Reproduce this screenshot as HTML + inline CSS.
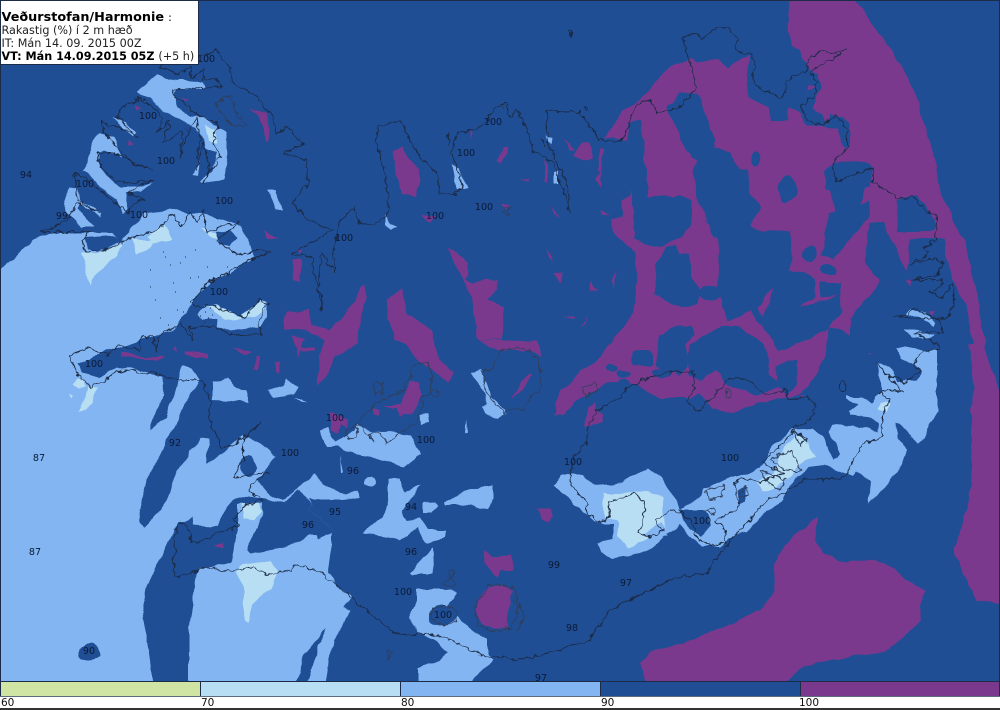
<!DOCTYPE html>
<html><head><meta charset="utf-8"><title>Veðurstofan/Harmonie</title>
<style>
html,body{margin:0;padding:0;background:#fff;width:1000px;height:710px;overflow:hidden}
svg{display:block;font-family:"DejaVu Sans","Liberation Sans",sans-serif}
.d{fill:#1f4e95}.l{fill:#82b5f1}.p{fill:#b7def2}.v{fill:#7b398d}
.c{fill:none;stroke:#1c2b47;stroke-width:1;stroke-linejoin:round}
.g{fill:none;stroke:#2f3f5c;stroke-width:1;stroke-linejoin:round}
.t text{font-size:9.6px;text-anchor:middle;fill:#0c1a35}
</style></head><body>
<svg width="1000" height="710" viewBox="0 0 1000 710" xmlns="http://www.w3.org/2000/svg">
<defs>
<filter id="wob" filterUnits="userSpaceOnUse" x="-20" y="-20" width="1040" height="750" color-interpolation-filters="sRGB">
<feTurbulence type="fractalNoise" baseFrequency="0.06" numOctaves="2" seed="4" result="n"/>
<feDisplacementMap in="SourceGraphic" in2="n" scale="7" xChannelSelector="R" yChannelSelector="G"/>
</filter>
<filter id="wig" filterUnits="userSpaceOnUse" x="-20" y="-20" width="1040" height="750" color-interpolation-filters="sRGB">
<feTurbulence type="fractalNoise" baseFrequency="0.16" numOctaves="2" seed="9" result="n"/>
<feDisplacementMap in="SourceGraphic" in2="n" scale="7" xChannelSelector="R" yChannelSelector="G"/>
</filter>
</defs>
<rect width="1000" height="681" fill="#1f4e95"/>

<g filter="url(#wob)">
<!-- west sea light -->
<path class="l" d="M-15,285L33,240L53,233L113,233L120,240L143,213L167,210L200,213L240,227L248,240L255,258L213,282L197,297L172,330L120,347L93,355L77,363L83,373L100,378L117,367L133,368L160,375L163,377L162,397L150,430L167,417L182,365L193,368L200,380L173,427L147,480L138,520L143,527L163,510L178,470L200,438L210,437L207,465L227,448L243,435L267,448L275,458L257,480L267,492L283,500L297,488L315,475L325,485L347,495L357,490L358,498L343,500L320,500L308,498L312,505L308,508L325,523L332,530L332,540L327,573L343,592L352,597L344,608L351,610L333,640L325,690L-15,690Z"/>
<!-- dark overlays on sea -->
<path class="d" d="M177,522L147,587L142,613L148,647L154,690L188,690L188,630L195,587L197,573L200,567L231,563L238,527L233,525L217,527L195,525L194,517L185,522Z"/>
<path class="d" d="M217,527L233,500L248,496L263,498L283,503L297,490L305,497L308,500L312,505L308,508L325,523L332,530L332,533L318,539L316,535L310,535L287,547L250,554L247,550L257,528L238,527Z"/>
<path class="d" d="M293,690L305,653L327,629L315,655L305,690Z"/>
<ellipse class="d" cx="249" cy="466" rx="7" ry="11"/>
<ellipse class="d" cx="89" cy="652" rx="10" ry="8"/>
<path class="l" d="M238,505L262,503L263,515L257,530L238,530Z"/>
<path class="p" d="M243,505L258,503L262,510L255,520L244,518Z"/>
<path class="p" d="M235,573L240,567L257,561L270,562L278,572L273,583L253,605L248,622L245,620L242,603L242,587Z"/>

<!-- Westfjord lights -->
<path class="d" d="M85,238L115,236L122,240L105,250L88,250Z"/>
<path class="l" d="M137,93L155,75L163,78L177,80L192,80L202,83L207,90L190,87L177,88L172,93L177,107L192,117L197,115L227,132L227,150L223,180L203,183L200,182L213,170L217,153L205,148L197,127L175,118L160,107L150,98Z"/>
<path class="l" d="M192,175L200,160L198,176Z"/>
<path class="p" d="M205,125L215,130L217,143L208,140Z"/>
<path class="l" d="M100,133L113,137L122,157L103,150L98,153L100,167L110,180L120,187L143,187L153,182L140,193L125,192L128,210L122,213L117,200L97,183L83,170L90,153L95,140Z"/>
<path class="l" d="M113,117L127,123L137,133L133,137L123,127Z"/>
<path class="l" d="M70,187L78,188L80,200L102,213L100,217L80,203L77,207L93,227L80,227L68,213L63,203Z"/>
<path class="p" d="M82,253L100,252L123,243L118,255L100,270L90,285L87,273Z"/>
<path class="p" d="M132,240L157,240L150,248L137,253Z"/>
<path class="p" d="M148,236L165,225L172,238L155,244Z"/>
<path class="p" d="M200,228L220,235L232,240L215,240Z"/>
<path class="d" d="M216,232L230,230L238,238L230,247L219,245Z"/>

<!-- Snaefellsnes -->
<path class="l" d="M197,315L205,305L215,303L240,317L260,300L267,303L267,317L260,325L240,330L217,328L207,323Z"/>
<path class="p" d="M207,305L217,304L240,318L260,300L265,304L262,312L242,320L225,318Z"/>
<path class="d" d="M203,320L217,320L218,328L205,328Z"/>
<path class="p" d="M73,383L77,378L84,380L86,388L78,389Z"/>
<path class="p" d="M80,413L88,388L97,388L92,403Z"/>
<path class="p" d="M71,394L75,397L72,399Z"/>

<!-- Mid / South light blobs -->
<path class="l" d="M213,383L227,377L235,387L245,390L248,402L213,400Z"/>
<path class="l" d="M267,392L283,387L288,377L298,387L293,395L273,398Z"/>
<path class="l" d="M293,399L303,399L307,403Z"/>
<path class="l" d="M320,430L327,427L335,442L355,430L357,425L370,430L410,435L420,453L402,467L373,457L362,455L347,452L337,447L328,447Z"/>
<path class="l" d="M340,455L343,472L341,472Z"/>
<circle class="l" cx="370" cy="482" r="5.500"/>
<path class="l" d="M388,480L400,480L405,492L420,485L402,510L405,520L420,518L428,530L445,530L445,537L425,542L417,528L400,540L363,533L383,517L388,497Z"/>
<path class="l" d="M423,501L435,503L437,507L431,513L423,513Z"/>
<path class="l" d="M445,502L470,490L492,485L492,498L487,508L463,505L445,505Z"/>
<path class="l" d="M410,573L428,552L433,547L434,572L420,572L412,575Z"/>
<path class="l" d="M420,415L428,414L429,422L421,424Z"/>
<path class="l" d="M466,418L468,433L465,433Z"/>
<path class="l" d="M472,372L482,368L490,397L505,410L507,415L497,418L487,413L483,407L487,403L477,380L472,373Z"/>
<path class="l" d="M417,590L447,590L457,592L448,605L458,615L463,622L480,635L488,640L488,653L493,660L463,690L418,690L418,668L440,660L447,652L437,643L417,632L408,618L417,600Z"/>
<ellipse class="d" cx="443" cy="615" rx="15" ry="10"/>
<path class="l" d="M386,215L391,223L397,227L391,230L386,225Z"/>
<path class="l" d="M452,165L458,168L468,188L464,189L456,188Z"/>
<path class="l" d="M546,135L552,138L551,146Z"/>
<path class="l" d="M554,172L559,172L559,183L554,183Z"/>
<path class="l" d="M268,190L276,190L282,210L275,210Z"/>
<ellipse class="l" cx="729" cy="215" rx="5" ry="7.500"/>

<!-- South-east light -->
<path class="l" d="M552,487L560,475L583,475L593,485L623,483L647,468L660,478L677,500L680,510L700,497L703,490L727,478L740,475L760,468L773,447L793,428L813,427L825,443L832,460L840,453L838,443L828,433L830,425L842,423L853,427L863,428L877,433L878,423L867,417L850,415L848,410L860,403L845,400L845,397L860,397L873,402L882,390L878,363L882,363L893,373L898,382L917,380L920,370L913,363L900,357L897,350L920,353L937,350L937,412L923,437L917,442L905,428L897,422L898,437L907,450L903,463L883,490L868,503L870,480L857,472L853,477L825,465L807,467L788,490L783,500L757,520L747,532L727,537L720,547L703,547L690,537L680,525L664,535L647,552L613,558L602,553L597,543L613,540L613,523L597,523L583,513L573,500Z"/>
<path class="d" d="M678,510L705,510L712,525L702,537L690,530Z"/>
<path class="d" d="M738,490L747,487L747,500L740,503Z"/>
<path class="p" d="M603,493L623,493L650,490L663,497L665,530L643,540L630,548L618,537L617,520L605,517Z"/>
<path class="p" d="M787,443L800,435L808,443L817,457L800,463L793,477L780,483L763,493L758,482L773,473L778,458Z"/>
<path class="p" d="M880,403L890,402L888,412L878,410Z"/>
<path class="l" d="M645,533L662,522L667,535L650,540Z"/>
<path class="l" d="M896,349L908,358L935,358L937,350L923,350L905,347Z"/>
<path class="l" d="M905,329L923,332L935,335L927,338L913,337Z"/>
<path class="l" d="M907,315L912,308L923,313L937,323L935,326L920,318L912,315Z"/>

<!-- Purple big NE mass -->
<path class="v" d="M553,415L563,390L583,370L600,357L617,335L633,313L637,293L635,252L612,232L612,220L622,217L622,200L630,197L632,180L627,140L605,137L623,110L640,100L665,72L672,67L693,57L698,63L718,58L728,67L740,60L750,57L747,77L748,97L770,107L772,120L788,120L788,108L800,113L807,125L827,127L837,128L840,140L845,147L850,147L850,123L843,115L830,115L827,125L813,107L820,87L820,73L808,67L800,50L790,43L787,-15L843,-15L870,20L895,55L915,90L925,125L935,160L943,200L953,217L965,243L973,273L980,313L985,345L972,345L968,310L957,287L948,263L943,240L932,238L910,240L908,255L905,270L905,287L892,287L880,280L865,300L850,320L850,335L828,340L825,360L803,393L787,397L757,403L733,413L712,410L700,395L690,398L660,398L640,388L625,380L605,385L575,400L563,415Z"/>
<path class="v" d="M984,345L993,373L1015,425L1015,605L975,600L968,582L960,567L955,547L962,527L968,500L972,483L972,373L968,345Z"/>
<path class="v" d="M817,517L815,540L823,553L847,563L873,558L893,568L905,580L925,590L920,620L890,650L830,660L800,668L780,690L650,690L640,665L650,652L680,645L715,630L760,610L776,590L775,563L785,545L800,530Z"/>
<!-- dark blobs over purple -->
<g class="d">
<path d="M627,125L640,120L645,140L642,160L647,170L647,197L680,195L692,200L692,225L683,235L660,248L653,247L635,240L632,197L628,170Z"/>
<path d="M667,107L680,93L695,93L702,100L705,113L715,140L715,147L730,153L740,170L748,170L750,193L762,208L750,227L767,233L770,240L757,240L715,237L710,230L698,200L693,177L697,160L690,157L680,137L670,117Z"/>
<path d="M665,248L675,243L680,255L690,255L690,275L700,290L698,305L680,308L665,300L655,295L655,265Z"/>
<ellipse cx="710" cy="293" rx="11" ry="8"/>
<path d="M703,220L715,228L757,232L770,230L792,232L793,260L788,270L805,272L815,280L815,297L800,308L840,295L842,312L825,330L812,337L797,345L777,352L763,325L750,310L737,318L727,322L720,300L717,287L720,240Z"/>
<path d="M687,375L690,345L700,338L720,328L740,325L750,335L765,345L770,375L785,385L757,395L728,385L715,370L700,380Z"/>
<path d="M655,365L660,335L680,325L693,325L693,335L685,345L690,360L680,375L660,368Z"/>
<rect x="632" y="350" width="21" height="17" rx="5"/>
<ellipse cx="612" cy="369" rx="6" ry="4"/><ellipse cx="625" cy="373" rx="7" ry="4"/><ellipse cx="625" cy="382" rx="6" ry="4"/>
<ellipse cx="661" cy="373" rx="10" ry="5"/>
<path d="M775,365L797,360L797,385L788,395L778,385Z"/>
<ellipse cx="810" cy="254" rx="8" ry="7"/>
<path d="M830,213L870,200L868,220L847,243L833,260L822,253Z"/>
<path d="M897,200L916,195L935,220L935,230L915,232L897,232L898,215Z"/>
<ellipse cx="756" cy="160" rx="5" ry="7"/>
<ellipse cx="787" cy="189" rx="9" ry="14"/>
<path d="M825,170L835,163L867,162L873,167L870,187L850,190L825,190Z"/>
<path d="M830,187L865,187L860,205L835,213Z"/>
<path d="M867,233L875,223L890,235L905,270L905,287L892,287L880,280L865,263Z"/>
<path d="M820,283L840,283L840,295L820,297Z"/>
<ellipse cx="828" cy="270" rx="8" ry="5"/>
<path d="M870,223L885,223L890,240L870,240Z"/>
<path d="M827,327L850,335L840,365L825,360Z"/>
<ellipse cx="425" cy="347" rx="8" ry="8"/>
</g>
<path class="v" d="M773,287L758,308L763,317L770,300Z"/>
<path class="v" d="M807,85L815,88L806,92Z"/>

<!-- purple patches -->
<g class="v">
<path d="M393,150L403,147L408,158L420,170L417,197L403,195L397,177Z"/>
<path d="M448,248L457,253L468,263L465,280L472,282L497,280L498,290L485,300L505,307L503,327L503,340L477,340L472,297Z"/>
<path d="M477,340L497,350L530,350L542,358L537,342Z"/>
<path d="M387,300L402,288L407,313L432,330L438,360L455,372L448,383L438,372L418,362L407,343L395,340L387,320Z"/>
<path d="M283,320L287,312L308,310L310,325L330,330L340,320L357,300L365,285L367,297L360,317L358,345L335,355L325,380L317,385L320,355L325,340L305,330L283,330Z"/>
<path d="M293,337L305,338L298,358Z"/>
<path d="M122,352L145,358L163,355L165,358L145,360L123,357Z"/>
<path d="M185,350L207,353L208,358L197,357L185,353Z"/>
<path d="M233,348L253,352L245,355Z"/>
<path d="M257,357L261,357L256,372L253,370Z"/>
<path d="M275,362L279,362L278,372L275,370Z"/>
<path d="M300,347L315,347L315,350L300,350Z"/>
<path d="M173,350L175,346L177,352Z"/>
<path d="M330,413L348,420L347,428L340,425L337,435L330,430Z"/>
<path d="M373,408L380,410L378,416L373,414Z"/>
<path d="M383,405L400,405L410,382L420,382L422,395L413,413L400,417L395,408Z"/>
<path d="M533,372L525,388L512,398L520,385L530,373Z"/>
<path d="M585,427L590,410L597,403L598,412L603,412L602,422L593,427Z"/>
<path d="M538,508L550,508L553,517L550,521L543,518Z"/>
<path d="M483,550L493,557L500,557L513,555L514,570L500,570L498,578L490,570L485,563Z"/>
<path d="M488,588L503,585L513,590L507,617L507,627L493,630L480,622L475,610L480,598Z"/>
<path d="M503,148L508,148L502,163L497,160Z"/>
<path d="M563,140L575,150L570,150Z"/>
<path d="M582,142L590,143L593,158L583,160L573,155Z"/>
<path d="M600,148L603,148L602,172L598,172Z"/>
<path d="M543,160L547,165L547,183L544,182Z"/>
<path d="M552,205L560,218L554,213Z"/>
<path d="M522,177L530,178L529,181Z"/>
<path d="M547,248L553,260L549,258Z"/>
<path d="M553,273L562,272L560,283Z"/>
<path d="M592,282L597,292L590,292Z"/>
<path d="M612,280L617,270L613,288Z"/>
<path d="M563,317L575,317L573,320Z"/>
<path d="M580,327L588,317L586,323Z"/>
<path d="M600,210L610,215L602,215Z"/>
<path d="M597,180L600,187L602,170Z"/>
<path d="M423,213L435,217L430,223Z"/>
<path d="M470,130L473,130L472,140Z"/>
<path d="M500,205L510,205L505,210Z"/>
<path d="M250,108L267,113L270,142L267,142L260,115Z"/>
<path d="M263,230L277,237L268,240Z"/>
<path d="M293,260L302,260L300,282L295,280Z"/>
<path d="M215,547L223,543L223,548Z"/>
<path d="M180,97L190,100L185,101Z"/>
<path d="M135,105L142,108L137,110Z"/>
<path d="M128,140L132,145L126,144Z"/>
<path d="M297,250L304,250L300,254Z"/>
<path d="M800,395L805,395L802,398Z"/>
<path d="M870,352L873,352L871,354Z"/>
<path d="M904,281L912,280L909,287Z"/>
<path d="M927,312L935,310L932,316Z"/>
</g>
</g>

<!-- coast -->
<g filter="url(#wig)">
<path class="c" d="M198,57L210,52L217,49L222,57L230,67L233,83L257,97L272,117L277,133L287,127L305,143L283,153L307,160L308,183L293,203L307,220L333,230L303,247L290,253L313,257L315,280L322,297L322,310L318,287L322,253L335,273L333,253L340,222L353,207L360,223L373,225L387,217L389,197L377,140L378,127L400,120L408,137L420,157L437,173L440,193L453,195L463,187L453,157L452,152L457,133L480,128L497,107L507,103L510,117L517,110L523,120L530,140L533,150L553,163L567,203L570,213L567,183L547,143L547,110L567,112L580,112L600,140L623,140L633,113L637,103L650,100L657,113L680,107L697,87L688,57L683,38L692,33L703,38L715,28L727,28L737,37L735,50L753,55L755,70L752,80L760,88L780,98L786,93L786,80L807,70L810,57L822,52L837,53L847,50L810,72L818,82L813,97L800,107L807,120L823,125L837,115L847,130L847,147L835,160L833,173L837,182L873,167L873,183L903,200L913,197L923,208L937,217L935,240L923,248L930,253L910,265L930,258L943,262L937,275L910,280L942,280L940,288L930,292L943,298L952,283L955,300L947,318L937,319L913,308L907,315L895,317L937,319L943,333L913,333L923,337L937,343L937,350L923,352L913,363L920,370L907,382L890,377L877,363L890,378L902,392L887,390L880,392L890,400L882,415L882,437L863,445L852,463L845,477L827,480L807,478L787,492L767,500L740,530L720,553L707,573L673,578L640,595L610,610L590,640L560,650L523,660L500,657L487,658L463,647L447,638L423,633L407,635L395,633L368,612L343,590L325,575L307,567L293,565L292,570L280,572L267,575L253,567L230,572L205,567L187,575L175,577L173,557L177,550L173,540L178,522L187,527L192,542L202,542L217,533L230,530L240,525L235,520L242,507L263,500L248,490L257,480L270,472L233,477L243,460L243,440L260,423L235,445L223,447L213,430L210,420L210,400L202,380L183,380L160,375L125,370L113,373L103,383L90,387L77,373L70,355L88,348L107,355L120,345L140,350L142,335L153,337L157,353L157,337L180,323L193,340L190,328L217,327L230,335L262,335L258,323L268,303L260,300L243,318L213,305L197,307L190,303L210,282L257,257L272,252L257,250L237,255L217,240L240,222L220,227L207,233L203,210L197,223L190,213L180,227L173,213L157,230L130,238L123,242L100,252L85,252L82,240L90,232L40,232L67,220L77,203L100,213L77,200L75,173L83,177L100,190L128,213L137,202L145,200L127,192L153,180L120,183L100,167L98,153L113,153L153,170L133,163L103,133L103,123L133,133L138,138L117,117L123,107L140,98L153,107L163,117L157,133L170,120L163,143L183,130L180,157L188,130L197,117L200,137L197,170L203,143L210,170L202,183L220,157L213,143L218,123L197,115L172,93L173,90L202,88L223,87L215,77L203,80L203,68L192,78L190,67L177,75L167,70L157,67L198,57"/>
<path class="c" d="M570,473L572,487L587,503L587,513L600,522L610,517L608,502L623,497L635,493L645,503L642,527L637,533L652,538L663,530L655,520L670,510L682,512L692,525L698,540L712,545L725,543L725,530L715,520L735,510L740,505L733,483L743,478L760,482L785,473L762,462L780,447L793,430L800,445L807,440L793,428M570,473L573,457L587,443L587,430L597,410L617,400L627,387L643,380L670,373L693,372L695,383L688,402L697,412L712,397L730,378L747,380L767,395L787,390L788,400L807,397L817,408L807,423L793,428L807,443"/>
<path class="g" d="M355,425L373,405L393,395L402,392L410,378L413,367L427,362L432,373L430,393L422,398L422,412L413,425L398,435L387,443L380,433L370,435L373,442L363,427Z"/>
<path class="g" d="M493,368L500,350L517,348L530,350L540,363L540,390L530,398L523,412L517,407L505,412L493,402L485,390L483,370Z"/>
<ellipse class="g" cx="378" cy="388" rx="5" ry="6"/><circle class="g" cx="435" cy="394" r="3"/><circle class="g" cx="352" cy="433" r="6"/>
<path class="g" d="M583,387L595,383L597,390L585,397Z"/>
<path class="g" d="M475,605L490,585L512,587L520,607L510,628L495,632L478,625Z"/>
<path class="g" d="M513,600L525,615L518,630L505,627"/>
<path class="g" d="M432,610L445,605L458,612L455,622L443,625L432,620Z"/>
<path class="g" d="M445,585L451,577L455,585L447,587Z"/>
<path class="g" d="M448,572L455,571L452,578Z"/>
<path class="g" d="M387,650L391,652L388,660Z"/>
<path class="g" d="M500,103L503,110M500,210L508,215L510,205L502,212"/>
<path class="g" d="M217,102L232,95L238,118L248,123L244,127L232,126L219,110Z"/>
<ellipse class="g" cx="729" cy="394" rx="3" ry="4"/>
<ellipse class="c" cx="843" cy="386" rx="3.500" ry="5"/>
<path class="c" d="M568,30L572,30L571,37ZM584,108h3v3h-3ZM448,133L449,145M541,138L546,147"/>
<path class="g" d="M705,490L725,485L722,497L710,500ZM705,510L715,507L712,515ZM740,497L745,485L748,497Z"/>
<path class="g" d="M770,460L790,450L800,470L785,470ZM760,470L785,480L780,490L770,485Z"/>
</g>
<path stroke="#1c2b47" stroke-width="1" fill="none" d="M163,252h1M165,257h1M170,265h1M180,263h1M185,257h1M195,250h1M150,270h1M173,283h1M175,292h1M190,278h1M198,277h1M207,267h1M227,267h1M160,318h1M168,325h1M177,310h1M183,312h1M150,287h1M155,300h1M205,312h1M208,318h1M200,316h1M212,315h1M204,322h1M210,308h1"/>

<g class="t">
<text x="206" y="62">100</text><text x="148" y="119">100</text><text x="166" y="164">100</text><text x="26" y="178">94</text><text x="85" y="187">100</text><text x="62" y="219">99</text><text x="139" y="218">100</text><text x="224" y="204">100</text><text x="493" y="125">100</text><text x="466" y="156">100</text><text x="484" y="210">100</text><text x="435" y="219">100</text><text x="344" y="241">100</text><text x="219" y="295">100</text><text x="94" y="367">100</text><text x="175" y="446">92</text><text x="39" y="461">87</text><text x="290" y="456">100</text><text x="335" y="421">100</text><text x="426" y="443">100</text><text x="353" y="474">96</text><text x="335" y="515">95</text><text x="308" y="528">96</text><text x="411" y="510">94</text><text x="411" y="555">96</text><text x="35" y="555">87</text><text x="554" y="568">99</text><text x="626" y="586">97</text><text x="403" y="595">100</text><text x="443" y="618">100</text><text x="572" y="631">98</text><text x="541" y="681">97</text><text x="89" y="654">90</text><text x="573" y="465">100</text><text x="730" y="461">100</text><text x="702" y="524">100</text>
</g>

<!-- Frame -->
<rect x="0" y="0" width="1000" height="1" fill="#1c2b47"/>
<rect x="0" y="0" width="1" height="681" fill="#1c2b47"/>
<rect x="999" y="0" width="1" height="681" fill="#1c2b47"/>

<!-- Legend -->
<rect x="0" y="681" width="1000" height="29" fill="#fff"/>
<rect x="1" y="682" width="199" height="14" fill="#d0e4a3"/>
<rect x="201" y="682" width="199" height="14" fill="#b7def2"/>
<rect x="401" y="682" width="199" height="14" fill="#82b5f1"/>
<rect x="601" y="682" width="199" height="14" fill="#1f4e95"/>
<rect x="801" y="682" width="198" height="14" fill="#7b398d"/>
<path d="M0,681.500H1000M0.500,681V696M200.500,681V696M400.500,681V696M600.500,681V696M800.500,681V696M999.500,681V696" stroke="#1c2b47" stroke-width="1" fill="none"/>
<path d="M0,696.500H1000" stroke="#5d6b7d" stroke-width="1"/>
<g font-size="10.500" fill="#111">
<text x="1" y="706">60</text><text x="201" y="706">70</text><text x="401" y="706">80</text><text x="601" y="706">90</text><text x="799" y="706">100</text>
</g>
<rect x="0" y="708" width="1000" height="2" fill="#333"/>

<!-- Info box -->
<rect x="0" y="0" width="199" height="65" fill="#1c2b47"/>
<rect x="1" y="1" width="197" height="63" fill="#fff"/>
<g fill="#000">
<text x="1.500" y="21" font-size="12.800" font-weight="bold">Veðurstofan/Harmonie<tspan font-weight="normal" dx="4" font-size="11">:</tspan></text>
<text x="1.500" y="34" font-size="11.200" fill="#222">Rakastig (%) í 2 m hæð</text>
<text x="1.500" y="47" font-size="11.200" fill="#222">IT: Mán 14. 09. 2015 00Z</text>
<text x="1.500" y="60" font-size="11.200" font-weight="bold">VT: Mán 14.09.2015 05Z <tspan font-weight="normal" fill="#222">(+5 h)</tspan></text>
</g>
</svg>
</body></html>
